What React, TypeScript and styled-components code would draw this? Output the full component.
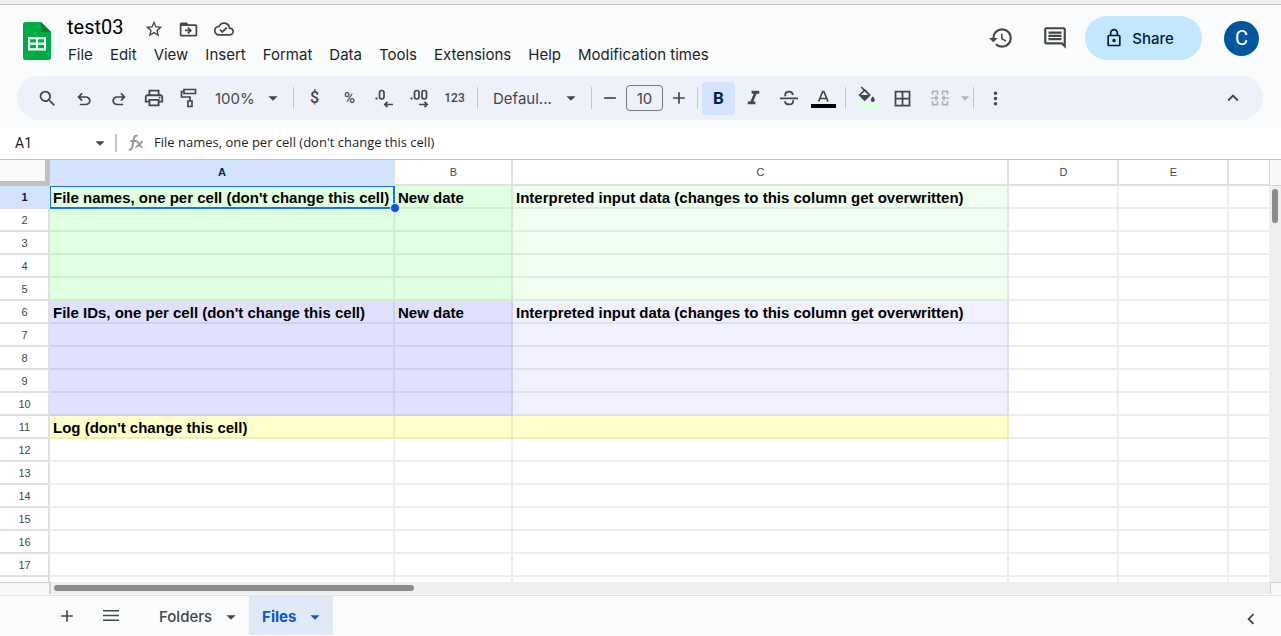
import React from "react";
import styled, { createGlobalStyle, css } from "styled-components";
import {
  MdAdd,
  MdArrowDropDown,
  MdBorderAll,
  MdFormatItalic,
  MdHistory,
  MdKeyboardArrowLeft,
  MdKeyboardArrowUp,
  MdMoreVert,
  MdOutlineCloudDone,
  MdOutlineInsertComment,
  MdOutlineLock,
  MdOutlinePrint,
  MdRemove,
  MdSearch,
  MdStarBorder,
} from "react-icons/md";

const ui = `Inter, "Liberation Sans", sans-serif`;
const compact = `Roboto, "Liberation Sans", sans-serif`;
const sheetFont = `"Liberation Sans", Arial, sans-serif`;

const color = {
  chrome: "#f9fbfd",
  toolbar: "#ecf1fa",
  icon: "#444746",
  text: "#1f1f1f",
  blue: "#0b57d0",
  selected: "#d3e3fd",
  line: "#c0c0c0",
};

const GlobalStyle = createGlobalStyle`
  *, *::before, *::after { box-sizing: border-box; }
  body { margin: 0; background: #fff; color: ${color.text}; font-family: ${ui}; }
  button, input, select { font: inherit; color: inherit; margin: 0; }
  button { border: 0; padding: 0; background: none; cursor: pointer; }
  svg { display: block; flex: none; }
`;

const Shell = styled.div`
  display: flex;
  flex-direction: column;
  height: 100vh;
  overflow: hidden;
  background: ${color.chrome};
  border-bottom: 1px solid #fff;
`;

const WindowEdge = styled.div`
  flex: none;
  height: 5px;
  background: #f1f1f2;
  border-bottom: 1px solid #bcbdc0;
`;

const Header = styled.header`
  display: flex;
  flex: none;
  height: 71px;
  padding: 0 22px 0 23px;
`;

const Logo = styled.a`
  margin: 17px 8px 0 0;
`;

const TitleArea = styled.div`
  display: flex;
  flex-direction: column;
  padding-top: 10px;
`;

const TitleRow = styled.div`
  display: flex;
  align-items: center;
  height: 26px;
  padding-left: 8px;
`;

const Title = styled.input`
  width: 62px;
  height: 24px;
  margin-right: 7px;
  padding: 0 0 2px;
  border: 0;
  outline: 0;
  background: transparent;
  color: #000;
  font-family: ${compact};
  font-size: 20px;
`;

const TitleButton = styled.button`
  display: grid;
  place-items: center;
  width: 35px;
  height: 24px;
  padding-top: 2px;
  color: ${color.icon};
`;

const MenuBar = styled.nav`
  display: flex;
  height: 28px;
`;

const MenuItem = styled.button`
  padding: 0 8px 0 9px;
  font-size: 15px;
  line-height: 28px;
  white-space: nowrap;
`;

const HeaderActions = styled.div`
  display: flex;
  align-items: center;
  height: 66px;
  margin-left: auto;
`;

const ActionButton = styled.button`
  display: grid;
  place-items: center;
  width: 54px;
  height: 44px;
  color: ${color.icon};
`;

const ShareButton = styled.button`
  display: flex;
  align-items: center;
  justify-content: center;
  gap: 8px;
  width: 117px;
  height: 44px;
  margin: 0 22px 0 3px;
  padding-right: 9px;
  border-radius: 22px;
  background: #c2e7ff;
  color: #001d35;
  font-size: 15px;
  font-weight: 500;
`;

const Avatar = styled.button`
  width: 35px;
  height: 35px;
  border-radius: 50%;
  background: #01579b;
  color: #fff;
  font-family: ${compact};
  font-size: 20px;
`;

const Toolbar = styled.div`
  display: flex;
  flex: none;
  align-items: center;
  height: 44px;
  margin: 0 18px 8px 17px;
  padding: 0 13px 0 12px;
  border-radius: 22px;
  background: ${color.toolbar};
  color: ${color.icon};
`;

const ToolButton = styled.button<{ $active?: boolean; $wide?: boolean; $muted?: boolean }>`
  display: grid;
  place-items: center;
  flex: none;
  width: ${(p) => (p.$wide ? 37 : 35)}px;
  height: 33px;
  border-radius: 4px;
  font-size: 14px;
  ${(p) => p.$active && css`
    width: 33px;
    margin-right: 1px;
    background: ${color.selected};
    color: #041e49;
  `}
  ${(p) => p.$muted && css`
    padding-left: 4px;
    color: #b0b4b8;
  `}
`;

const NarrowButton = styled.button<{ $muted?: boolean }>`
  display: grid;
  place-items: center;
  flex: none;
  width: ${(p) => (p.$muted ? 14 : 28)}px;
  height: 33px;
  color: ${(p) => (p.$muted ? "#b0b4b8" : "inherit")};
`;

const Separator = styled.span`
  flex: none;
  width: 1px;
  height: 22px;
  margin: 0 4px;
  background: #c4c7c5;
`;

const NumberTools = styled.div`
  display: flex;
  margin: 0 1px 0 -1px;
`;

const SelectBox = styled.label<{ $width: number; $inset: number }>`
  display: flex;
  align-items: center;
  flex: none;
  width: ${(p) => p.$width}px;
  height: 33px;
  padding: 0 5px 0 ${(p) => p.$inset}px;
`;

const Select = styled.select`
  flex: 1;
  min-width: 0;
  height: 33px;
  padding: 0;
  border: 0;
  outline: 0;
  appearance: none;
  background: transparent;
  font-size: 15px;
`;

const SizeInput = styled.input`
  flex: none;
  width: 37px;
  height: 26px;
  margin: 0 2px;
  padding: 0;
  border: 1px solid #747775;
  border-radius: 4px;
  background: transparent;
  text-align: center;
  font-size: 15px;
`;

const Spacer = styled.span`
  flex: 1;
`;

const Glyph = styled.span<{ $size: number; $bold?: boolean }>`
  font-family: ${compact};
  font-size: ${(p) => p.$size}px;
  font-weight: ${(p) => (p.$bold ? 700 : 500)};
  line-height: 20px;
`;

const FormulaBar = styled.div`
  display: flex;
  flex: none;
  align-items: center;
  height: 32px;
  padding-bottom: 1px;
  border-bottom: 1px solid ${color.line};
  background: #fff;
  font-family: ${compact};
`;

const NameBox = styled.input`
  width: 89px;
  height: 28px;
  padding: 0 0 0 15px;
  border: 0;
  outline: 0;
  background: transparent;
  font-size: 14px;
`;

const NameArrow = styled.button`
  display: grid;
  place-items: center;
  width: 16px;
  height: 28px;
  color: ${color.icon};
`;

const FormulaDivider = styled.span`
  width: 2px;
  height: 18px;
  margin: 0 11px 0 10px;
  background: #c7c7c7;
`;

const FormulaInput = styled.input`
  flex: 1;
  height: 28px;
  padding: 0 8px 2px 10px;
  border: 0;
  outline: 0;
  background: transparent;
  font-family: "Open Sans", "Liberation Sans", sans-serif;
  font-size: 13px;
`;

const SheetArea = styled.main`
  display: flex;
  flex: 1;
  min-height: 0;
`;

const GridViewport = styled.div`
  flex: 1;
  min-width: 0;
  overflow: hidden;
  background: #fff;
`;

const Grid = styled.table`
  width: 100%;
  table-layout: fixed;
  border-collapse: separate;
  border-spacing: 0;
  font-family: ${sheetFont};

  th:last-child,
  td:last-child {
    border-right-width: 0;
  }
`;

const Col = styled.col<{ $width?: number }>`
  width: ${(p) => (p.$width ? `${p.$width}px` : "auto")};
`;

const Corner = styled.td`
  height: 26px;
  padding: 0;
  border: solid #c0c0c0;
  border-width: 0 5px 5px 0;
  background: #f8f9fa;
`;

const HeadCell = styled.th<{ $on?: boolean }>`
  height: 26px;
  padding: 0 0 0 1px;
  border: solid #e0e0e0;
  border-width: 0 2px 2px 0;
  background: ${(p) => (p.$on ? color.selected : "#fff")};
  color: ${(p) => (p.$on ? "#041e49" : color.icon)};
  font-size: 11px;
  font-weight: ${(p) => (p.$on ? 700 : 400)};
  line-height: 20px;
`;

const RowHead = styled(HeadCell)`
  height: 23px;
`;

const Cell = styled.td<{ $fill?: string }>`
  position: relative;
  height: 23px;
  padding: 2px 0 0 3px;
  border: solid rgba(0, 0, 0, 0.07);
  border-width: 0 2px 2px 0;
  background: ${(p) => p.$fill ?? "#fff"};
  color: #000;
  font-size: 15px;
  font-weight: 700;
  line-height: 19px;
  white-space: nowrap;
`;

const Selection = styled.span`
  position: absolute;
  inset: 0 -2px -2px 0;
  z-index: 1;
  border: solid #1a73e8;
  border-width: 1px 2px 2px 1px;

  &::after {
    content: "";
    position: absolute;
    right: -7px;
    bottom: -6px;
    width: 10px;
    height: 10px;
    border: 1px solid #d3e3fd;
    border-radius: 50%;
    background: ${color.blue};
  }
`;

const VerticalScroll = styled.div`
  display: flex;
  flex-direction: column;
  flex: none;
  width: 12px;
  background: #edeff1;
`;

const VerticalCap = styled.div`
  height: 26px;
  border: solid #d6d7d9;
  border-width: 0 0 1px 1px;
  background: #f8f8f8;
`;

const VerticalThumb = styled.div`
  width: 6px;
  height: 34px;
  margin: 3px 0 0 3px;
  border-radius: 3px;
  background: #8a8c8d;
`;

const HorizontalScroll = styled.div`
  display: flex;
  flex: none;
  align-items: center;
  height: 13px;
  border-bottom: 1px solid #f8f9fb;
  background: #edeff1;
`;

const HorizontalCap = styled.div<{ $end?: boolean }>`
  width: ${(p) => (p.$end ? 11 : 51)}px;
  height: 12px;
  border: solid #d0d1d3;
  border-width: ${(p) => (p.$end ? "1px 0 0 1px" : "1px 2px 0 0")};
  background: #f8f8f8;
`;

const HorizontalThumb = styled.div`
  width: 360px;
  height: 6px;
  margin-left: 3px;
  border-radius: 3px;
  background: #8a8c8d;
`;

const TabBar = styled.footer`
  display: flex;
  flex: none;
  align-items: stretch;
  height: 40px;
  padding: 0 8px 0 45px;
  border-top: 1px solid #e1e3e6;
  color: ${color.icon};
`;

const TabIcon = styled.button<{ $low?: boolean }>`
  display: grid;
  place-items: center;
  width: 44px;
  padding-top: ${(p) => (p.$low ? 6 : 0)}px;
`;

const SheetTab = styled.button<{ $active?: boolean }>`
  display: flex;
  align-items: center;
  gap: 8px;
  padding: 2px 7px 0 13px;
  background: ${(p) => (p.$active ? "#e1e9f7" : "transparent")};
  color: ${(p) => (p.$active ? color.blue : color.icon)};
  font-size: 15px;
  font-weight: ${(p) => (p.$active ? 700 : 500)};
`;

const TabList = styled.nav`
  display: flex;
  margin-left: 13px;
`;

const PathIcon = ({ d, size = 18, box = "0 0 24 24" }: { d: string; size?: number; box?: string }) => (
  <svg width={size} height={size} viewBox={box} fill="currentColor" aria-hidden="true">
    <path d={d} />
  </svg>
);

const UNDO =
  "M280-200v-80h284q63 0 109.5-40T720-420q0-60-46.5-100T564-560H312l104 104-56 56-200-200 200-200 56 56-104 104h252q97 0 169.5 63T800-420q0 94-72.5 157T564-200H280Z";
const REDO =
  "M396-200q-97 0-169.5-63T154-420q0-94 72.5-157T396-640h252L544-744l56-56 200 200-200 200-56-56 104-104H396q-63 0-109.5 40T240-420q0 60 46.5 100T396-280h284v80H396Z";
const MOVE =
  "M20 6h-8l-2-2H4c-1.100 0-2 .9-2 2v12c0 1.100.9 2 2 2h16c1.100 0 2-.9 2-2V8c0-1.100-.9-2-2-2zm0 12H4V8h16v10zm-8-1 4-4-4-4-1.400 1.400L12.200 12H8v2h4.200l-1.600 1.600L12 17z";
const MERGE =
  "M2 3h8v5H8V5H4v3H2zM14 3h8v5h-2V5h-4v3h-2zM2 16h2v3h4v-3h2v5H2zM20 16h2v5h-8v-5h2v3h4zM1 11h5.500V8l4 4-4 4v-3H1zM23 11h-5.500V8l-4 4 4 4v-3H23z";

const SheetsLogo = () => (
  <svg width="28" height="38" viewBox="0 0 28 38" aria-hidden="true">
    <path d="M2.500 0H18l10 10v25.500a2.500 2.500 0 0 1-2.500 2.500h-23A2.500 2.500 0 0 1 0 35.500v-33A2.500 2.500 0 0 1 2.500 0z" fill="#00ac47" />
    <path d="M18 0l10 10H18z" fill="#00832d" />
    <path d="M5 15h18v13.500H5zM7 17.200v3.300h6v-3.300zM15 17.200v3.300h6v-3.300zM7 22.700v3.500h6v-3.500zM15 22.700v3.500h6v-3.500z" fill="#fff" fillRule="evenodd" />
  </svg>
);

const RollerIcon = () => (
  <svg width="18" height="22" viewBox="0 0 18 22" fill="none" stroke="currentColor" strokeWidth="1.700" aria-hidden="true">
    <path d="M4 2.500h11.500v4H4zM4 4.500H1.500V10H10v4M8 14h4v5.500H8z" />
  </svg>
);

const StrikeIcon = () => (
  <svg width="18" height="16" viewBox="0 0 18 16" fill="none" stroke="currentColor" strokeWidth="1.800" aria-hidden="true">
    <path d="M0 8.300h18M13 5C12.600 2.600 11.200 1.700 9 1.700S5.200 2.800 5.200 4.800c0 .6.100 1 .4 1.400M4.800 11.200c.5 2.200 2 3.200 4.300 3.200s4-1.200 4-3.200c0-.4 0-.6-.2-1" />
  </svg>
);

const DecimalIcon = ({ more }: { more?: boolean }) => (
  <svg width="22" height="20" viewBox="0 0 22 20" fill="none" stroke="currentColor" strokeWidth="1.700" aria-hidden="true">
    <path d="M1.500 10.500h2" strokeWidth="2" />
    <rect x="5.500" y="2.500" width="4.500" height="8.500" rx="2.200" />
    {more ? (
      <>
        <rect x="13" y="2.500" width="4.500" height="8.500" rx="2.200" />
        <path d="M10 16.500h8M15.500 13.800l2.700 2.700-2.700 2.700" />
      </>
    ) : (
      <path d="M19 16.500h-8M13.500 13.800l-2.700 2.700 2.700 2.700" />
    )}
  </svg>
);

const TextColorIcon = () => (
  <svg width="25" height="22" viewBox="0 0 25 22" aria-hidden="true">
    <path d="M7.600 14.500L11.700 4.500h1.200L17 14.500M9.200 11.500h6.200" fill="none" stroke="currentColor" strokeWidth="1.700" />
    <path d="M0 17h25v4H0z" fill="#000" />
  </svg>
);

const FillColorIcon = () => (
  <svg width="25" height="26" viewBox="0 0 25 26" aria-hidden="true">
    <path d="M6.200 2l7 7M9.700 5L4.700 10l5 5 5-5z" fill="none" stroke="currentColor" strokeWidth="1.700" />
    <path d="M4.500 10h10.700l-5.500 5.500zM17.800 11.200s2 2.300 2 3.700a2 2 0 0 1-4 0c0-1.400 2-3.700 2-3.700z" fill="currentColor" />
    <path d="M0 19h25v4H0z" fill="#dcffdc" />
  </svg>
);

const FunctionIcon = () => (
  <svg width="16" height="18" viewBox="0 0 16 18" fill="none" stroke="#999" strokeWidth="2" aria-hidden="true">
    <path d="M1 15.500c2.500.8 3-1 3.500-3.500L6 4.500C6.400 2.200 7.500 1.300 9.500 2M2.500 7h6M8 7.500c3-1 3 6.500 6.500 5.500M15 7.500c-2.500.2-4.500 5.500-7.500 5.500" />
  </svg>
);

const menus = ["File", "Edit", "View", "Insert", "Format", "Data", "Tools", "Extensions", "Help", "Modification times"];
const columns = ["A", "B", "C", "D", "E", ""];
const columnWidths = [50, 345, 118, 496, 110, 110, undefined];

const INTERPRETED = "Interpreted input data (changes to this column get overwritten)";
const values: Record<number, string[]> = {
  1: ["File names, one per cell (don't change this cell)", "New date", INTERPRETED],
  6: ["File IDs, one per cell (don't change this cell)", "New date", INTERPRETED],
  11: ["Log (don't change this cell)"],
};

const fillFor = (row: number, col: number) => {
  if (col > 2) return undefined;
  if (row <= 5) return col === 2 ? "#f0fff0" : "#e0ffe0";
  if (row <= 10) return col === 2 ? "#f0f0ff" : "#e0e0ff";
  if (row === 11) return "#ffffcc";
  return undefined;
};

const numberedRows = 17;
const rows = Array.from({ length: numberedRows + 1 }, (_, i) => i + 1);

export default function App() {
  return (
    <Shell>
      <GlobalStyle />
      <WindowEdge />
      <Header>
        <Logo href="#" aria-label="Sheets home">
          <SheetsLogo />
        </Logo>
        <TitleArea>
          <TitleRow>
            <Title aria-label="Document name" defaultValue="test03" />
            <TitleButton aria-label="Star"><MdStarBorder size={20} /></TitleButton>
            <TitleButton aria-label="Move"><PathIcon d={MOVE} size={21} /></TitleButton>
            <TitleButton aria-label="Saved to cloud"><MdOutlineCloudDone size={20} /></TitleButton>
          </TitleRow>
          <MenuBar>
            {menus.map((m) => (
              <MenuItem key={m}>{m}</MenuItem>
            ))}
          </MenuBar>
        </TitleArea>
        <HeaderActions>
          <ActionButton aria-label="Version history"><MdHistory size={26} /></ActionButton>
          <ActionButton aria-label="Comments"><MdOutlineInsertComment size={26} /></ActionButton>
          <ShareButton>
            <MdOutlineLock size={20} />
            Share
          </ShareButton>
          <Avatar aria-label="Account">C</Avatar>
        </HeaderActions>
      </Header>

      <Toolbar role="toolbar">
        <ToolButton $wide aria-label="Search"><MdSearch size={21} /></ToolButton>
        <ToolButton aria-label="Undo"><PathIcon d={UNDO} size={20} box="0 -1030 960 960" /></ToolButton>
        <ToolButton aria-label="Redo"><PathIcon d={REDO} size={20} box="0 -1030 960 960" /></ToolButton>
        <ToolButton aria-label="Print"><MdOutlinePrint size={22} /></ToolButton>
        <ToolButton aria-label="Paint format"><RollerIcon /></ToolButton>
        <SelectBox $width={83} $inset={9}>
          <Select aria-label="Zoom"><option>100%</option></Select>
          <MdArrowDropDown size={22} />
        </SelectBox>
        <Separator />
        <NumberTools>
          <ToolButton aria-label="Currency"><Glyph $size={16}>$</Glyph></ToolButton>
          <ToolButton aria-label="Percent"><Glyph $size={15}>%</Glyph></ToolButton>
          <ToolButton aria-label="Decrease decimals"><DecimalIcon /></ToolButton>
          <ToolButton aria-label="Increase decimals"><DecimalIcon more /></ToolButton>
          <ToolButton aria-label="More formats"><Glyph $size={12}>123</Glyph></ToolButton>
        </NumberTools>
        <Separator />
        <SelectBox $width={105} $inset={11}>
          <Select aria-label="Font"><option>Defaul...</option></Select>
          <MdArrowDropDown size={22} />
        </SelectBox>
        <Separator />
        <NarrowButton aria-label="Decrease font size"><MdRemove size={20} /></NarrowButton>
        <SizeInput aria-label="Font size" defaultValue="10" />
        <NarrowButton aria-label="Increase font size"><MdAdd size={20} /></NarrowButton>
        <Separator />
        <ToolButton $active aria-label="Bold"><Glyph $size={17} $bold>B</Glyph></ToolButton>
        <ToolButton aria-label="Italic"><MdFormatItalic size={23} /></ToolButton>
        <ToolButton aria-label="Strikethrough"><StrikeIcon /></ToolButton>
        <ToolButton aria-label="Text color"><TextColorIcon /></ToolButton>
        <Separator />
        <ToolButton aria-label="Fill color"><FillColorIcon /></ToolButton>
        <ToolButton aria-label="Borders"><MdBorderAll size={21} /></ToolButton>
        <ToolButton $muted aria-label="Merge cells"><PathIcon d={MERGE} size={20} /></ToolButton>
        <NarrowButton $muted aria-label="Merge options"><MdArrowDropDown size={20} /></NarrowButton>
        <Separator />
        <ToolButton aria-label="More"><MdMoreVert size={21} /></ToolButton>
        <Spacer />
        <ToolButton aria-label="Hide menus"><MdKeyboardArrowUp size={22} /></ToolButton>
      </Toolbar>

      <FormulaBar>
        <NameBox aria-label="Name box" defaultValue="A1" />
        <NameArrow aria-label="Named ranges"><MdArrowDropDown size={22} /></NameArrow>
        <FormulaDivider />
        <FunctionIcon />
        <FormulaInput aria-label="Formula" defaultValue={values[1][0]} />
      </FormulaBar>

      <SheetArea>
        <GridViewport>
          <Grid>
            <colgroup>
              {columnWidths.map((w, i) => (
                <Col key={i} $width={w} />
              ))}
            </colgroup>
            <thead>
              <tr>
                <Corner />
                {columns.map((c, i) => (
                  <HeadCell key={i} scope="col" $on={i === 0}>{c}</HeadCell>
                ))}
              </tr>
            </thead>
            <tbody>
              {rows.map((r) => (
                <tr key={r}>
                  <RowHead scope="row" $on={r === 1}>{r <= numberedRows ? r : null}</RowHead>
                  {columns.map((_, c) => (
                    <Cell key={c} $fill={fillFor(r, c)}>
                      {values[r]?.[c]}
                      {r === 1 && c === 0 && <Selection />}
                    </Cell>
                  ))}
                </tr>
              ))}
            </tbody>
          </Grid>
        </GridViewport>
        <VerticalScroll>
          <VerticalCap />
          <VerticalThumb />
        </VerticalScroll>
      </SheetArea>
      <HorizontalScroll>
        <HorizontalCap />
        <HorizontalThumb />
        <Spacer />
        <HorizontalCap $end />
      </HorizontalScroll>

      <TabBar>
        <TabIcon aria-label="Add sheet"><MdAdd size={20} /></TabIcon>
        <TabIcon aria-label="All sheets">
          <PathIcon d="M0 1h16v1.500H0zM0 5.800h16v1.500H0zM0 10.600h16v1.500H0z" size={16} box="0 -1 16 16" />
        </TabIcon>
        <TabList>
          <SheetTab>Folders<MdArrowDropDown size={22} /></SheetTab>
          <SheetTab $active>Files<MdArrowDropDown size={22} /></SheetTab>
        </TabList>
        <Spacer />
        <TabIcon $low aria-label="Show side panel"><MdKeyboardArrowLeft size={22} /></TabIcon>
      </TabBar>
    </Shell>
  );
}
